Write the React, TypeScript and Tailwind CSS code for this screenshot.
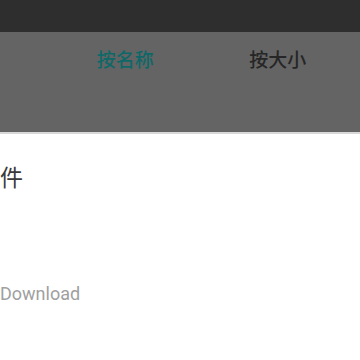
import React from "react";

const App = () => {
  return (
    <div
      className="w-[360px] h-[360px] overflow-hidden bg-white"
      style={{ fontFamily: 'Roboto, "Noto Sans CJK SC", sans-serif' }}
    >
      <div className="h-[32px] bg-[#2e2e2e]" />
      <div className="h-[100px] bg-[#646464]">
        <div className="grid grid-cols-2 h-[58px] items-center pl-[49px] pr-[6px] text-[19px] font-medium">
          <span className="text-center text-[#0f6868]">按名称</span>
          <span className="text-center text-[#262626]">按大小</span>
        </div>
      </div>
      <div className="h-[2px] bg-[#d8d8d8]" />
      <div className="pt-[30px]">
        <p className="ml-[-23px] text-[23px] leading-[30px] text-[#3a3a3a]">文件</p>
        <p className="mt-[88px] text-[18px] leading-[24px] text-[#a0a0a0]">Download</p>
      </div>
    </div>
  );
};

export default App;
